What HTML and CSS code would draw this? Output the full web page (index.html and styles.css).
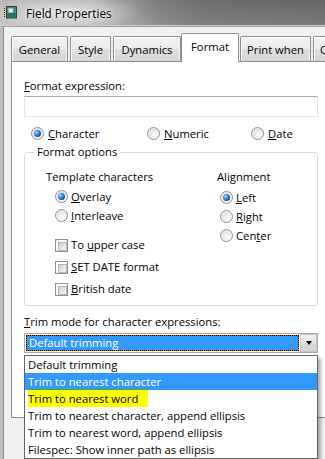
FILE: index.html
```html
<!DOCTYPE html>
<html>
<head>
<meta charset="utf-8">
<title>Field Properties</title>
<link rel="stylesheet" href="styles.css">
</head>
<body>
<div class="window">
  <div class="titlebar">
    <svg class="appicon" width="13" height="13" viewBox="0 0 13 13" aria-hidden="true">
      <line x1="0.5" y1="2" x2="0.5" y2="12" stroke="#e6cf1a" stroke-width="1"/>
      <line x1="0.5" y1="2" x2="0.5" y2="12" stroke="#222" stroke-width="1" stroke-dasharray="1 1"/>
      <rect x="2.5" y="0.5" width="10" height="11.5" fill="#3f8c86" stroke="#3a3a3a"/>
      <rect x="3.5" y="7" width="8" height="4.5" fill="#2f6f6a"/>
      <rect x="4.5" y="2.5" width="4.5" height="4" fill="#d9f0ee" stroke="#8fc1bd" stroke-width="0.6"/>
    </svg>
    <span class="title">Field Properties</span>
  </div>
  <div class="frame">
    <div class="client">
      <div class="tabstrip">
        <div class="tab t-general">General</div>
        <div class="tab t-style">Style</div>
        <div class="tab t-dynamics">Dynamics</div>
        <div class="tab active t-format">Format</div>
        <div class="tab t-print">Print when</div>
        <div class="tab t-more">C</div>
      </div>
      <div class="panel">
        <div class="content">
          <div class="field-label"><u>F</u>ormat expression:</div>
          <div class="textbox"></div>
          <div class="typerow">
            <div class="opt opt-char"><span class="radio on"></span><span><u>C</u>haracter</span></div>
            <div class="opt opt-num"><span class="radio"></span><span><u>N</u>umeric</span></div>
            <div class="opt"><span class="radio"></span><span><u>D</u>ate</span></div>
          </div>
          <fieldset class="group">
            <legend>Format options</legend>
            <div class="cols">
              <div class="col-left">
                <div class="heading">Template characters</div>
                <div class="rlist">
                  <div class="rrow"><span class="radio on"></span><span><u>O</u>verlay</span></div>
                  <div class="rrow"><span class="radio"></span><span><u>I</u>nterleave</span></div>
                </div>
                <div class="checks">
                  <div class="crow"><span class="check"></span><span>To <u>u</u>pper case</span></div>
                  <div class="crow"><span class="check"></span><span><u>S</u>ET DATE format</span></div>
                  <div class="crow"><span class="check"></span><span><u>B</u>ritish date</span></div>
                </div>
              </div>
              <div class="col-right">
                <div class="heading">Alignment</div>
                <div class="rlist">
                  <div class="rrow"><span class="radio on"></span><span><u>L</u>eft</span></div>
                  <div class="rrow"><span class="radio"></span><span><u>R</u>ight</span></div>
                  <div class="rrow"><span class="radio"></span><span>Cen<u>t</u>er</span></div>
                </div>
              </div>
            </div>
          </fieldset>
          <div class="field-label trim-label"><u>T</u>rim mode for character expressions:</div>
          <div class="combo-wrap">
            <div class="combo">
              <div class="combo-value">Default trimming</div>
              <div class="combo-btn"><span class="arrow"></span></div>
            </div>
            <ul class="droplist">
              <li>Default trimming</li>
              <li class="sel">Trim to nearest character</li>
              <li><span class="marker">Trim to nearest word</span></li>
              <li>Trim to nearest character, append ellipsis</li>
              <li>Trim to nearest word, append ellipsis</li>
              <li>Filespec: Show inner path as ellipsis</li>
            </ul>
          </div>
        </div>
      </div>
    </div>
  </div>
</div>
</body>
</html>
```

FILE: styles.css
```css
* { box-sizing: border-box; }

html, body {
  margin: 0;
  padding: 0;
}

body {
  width: 325px;
  height: 459px;
  overflow: hidden;
  font-family: "Open Sans", "Noto Sans", sans-serif;
  font-size: 11.25px;
  color: #000;
  background: #f0f0f0;
}

.window {
  display: flex;
  flex-direction: column;
  height: 459px;
}

/* ---------- title bar ---------- */
.titlebar {
  display: flex;
  align-items: center;
  gap: 9px;
  height: 26px;
  padding-left: 4px;
  border-bottom: 1px solid #cdcdcd;
  background:
    radial-gradient(ellipse 75px 17px at 66px 12px, rgba(255,255,255,0.55), rgba(255,255,255,0) 100%),
    linear-gradient(180deg, rgba(0,0,0,0.06), rgba(255,255,255,0.08)),
    linear-gradient(90deg, #c3c3c3 0%, #bdbdbd 28%, #a4a4a4 38%, #858585 48%, #747474 62%, #6d6d6d 100%);
}

.appicon {
  flex: none;
  display: block;
}

.title {
  font-size: 11.75px;
  color: #000;
  text-shadow: 0 0 6px rgba(255,255,255,0.9), 0 0 3px rgba(255,255,255,0.8);
}

/* ---------- frame / client ---------- */
.frame {
  flex: 1;
  padding-left: 3px;
  background: #bdbdbd;
}

.client {
  height: 100%;
  background: #f0f0f0;
  border-left: 1px solid #8a8a8a;
  border-top: 1px solid #9d9d9d;
}

/* ---------- tabs ---------- */
.tabstrip {
  display: flex;
  align-items: flex-end;
  height: 28px;
  margin-top: 6px;
  margin-left: 7px;
}

.tab {
  flex: none;
  height: 25px;
  padding-top: 5px;
  line-height: 16px;
  text-align: center;
  white-space: nowrap;
  overflow: hidden;
  border: 1px solid #898c95;
  border-bottom: none;
  border-radius: 2px 2px 0 0;
  background: linear-gradient(180deg, #f3f3f3 0%, #ececec 48%, #dedede 52%, #d6d6d6 100%);
  box-shadow: inset 1px 1px 0 #fcfcfc, inset -1px 0 0 #f4f4f4;
}

.tab.active {
  position: relative;
  z-index: 1;
  height: 29px;
  margin-bottom: -1px;
  padding-top: 5px;
  background: #fff;
  box-shadow: none;
}

.t-general  { width: 57px; }
.t-style    { width: 41px; margin-left: 2px; }
.t-dynamics { width: 68px; margin-left: 2px; }
.t-format   { width: 58px; }
.t-print    { width: 71px; margin-left: 1px; }
.t-more     { width: 60px; margin-left: 2px; text-align: left; padding-left: 6px; }

/* ---------- panel ---------- */
.panel {
  width: 340px;
  height: 357px;
  margin-left: 7px;
  border: 1px solid #898c95;
  background: #fff;
  padding: 16px 0 0 12px;
}

.content {
  width: 294px;
}

.field-label {
  line-height: 16px;
  white-space: nowrap;
}

.textbox {
  height: 21px;
  margin-top: 2px;
  background: #fff;
  border: 1px solid;
  border-color: #abadb3 #dbdfe6 #e3e9ef #e2e3ea;
}

.typerow {
  display: flex;
  height: 17px;
  line-height: 17px;
  margin-top: 8px;
  padding-left: 7px;
}

.opt {
  display: flex;
  align-items: center;
  gap: 4px;
}

.opt-char { width: 116px; }
.opt-num  { width: 104px; }

/* radio button */
.radio {
  flex: none;
  display: inline-flex;
  align-items: center;
  justify-content: center;
  width: 13px;
  height: 13px;
  border-radius: 50%;
  border: 1px solid #8d8f91;
  background: radial-gradient(circle at 60% 65%, #fbfbfb 0, #eeeeee 35%, #c9cacc 100%);
  box-shadow: inset 0 0 0 1px rgba(255,255,255,0.6);
}

.radio.on::after {
  content: "";
  width: 7px;
  height: 7px;
  border-radius: 50%;
  background: radial-gradient(circle at 35% 35%, #a7dcff 0, #3b8fdc 35%, #164f92 70%, #0d3668 100%);
}

/* checkbox */
.check {
  flex: none;
  display: inline-block;
  width: 13px;
  height: 13px;
  border: 1px solid #8e8f8f;
  background: #fff;
  padding: 2px;
}

.check::after {
  content: "";
  display: block;
  width: 100%;
  height: 100%;
  border: 1px solid #b3b6ba;
  background: linear-gradient(135deg, #cdd0d4 0%, #e4e6e8 55%, #f4f5f6 100%);
}

/* ---------- group box ---------- */
.group {
  margin: 2px 0 0;
  padding: 9px 0 5px 0;
  min-width: 0;
  border: 1px solid #d5dfe5;
  border-radius: 3px;
}

.group legend {
  margin-left: 9px;
  padding: 0 3px;
  line-height: 16px;
}

.cols {
  display: flex;
  padding-left: 21px;
}

.col-left { width: 171px; }

.heading {
  line-height: 16px;
  white-space: nowrap;
}

.rlist {
  margin-top: 2px;
  padding-left: 9px;
}

.col-right .rlist {
  margin-top: 3px;
  padding-left: 3px;
}

.rrow {
  display: flex;
  align-items: center;
  gap: 3px;
  height: 19px;
  line-height: 19px;
  white-space: nowrap;
}

.checks {
  margin-top: 9px;
  padding-left: 9px;
}

.crow {
  display: flex;
  align-items: center;
  gap: 3px;
  height: 22px;
  line-height: 22px;
  white-space: nowrap;
}

/* ---------- combo box ---------- */
.trim-label {
  margin-top: 8px;
}

.combo-wrap {
  position: relative;
  margin-top: 3px;
}

.combo {
  display: flex;
  height: 20px;
  border: 1px solid #a9abaf;
  background: #fff;
}

.combo-value {
  flex: 1;
  margin: 1px 1px 1px 1px;
  padding-left: 2px;
  line-height: 14px;
  color: #fff;
  border: 1px dotted #000;
  background: linear-gradient(#3399ff, #3399ff) padding-box, #c86400 border-box;
  white-space: nowrap;
}

.combo-btn {
  flex: none;
  width: 17px;
  display: flex;
  align-items: center;
  justify-content: center;
  border: 1px solid #c4c4c4;
  background: linear-gradient(180deg, #f1f1f1 0%, #e5e5e5 50%, #d9d9d9 51%, #d3d3d3 100%);
}

.arrow {
  width: 0;
  height: 0;
  border-left: 3.5px solid transparent;
  border-right: 3.5px solid transparent;
  border-top: 4px solid #000;
}

/* ---------- drop-down list ---------- */
.droplist {
  position: absolute;
  z-index: 2;
  top: calc(100% + 2px);
  left: 0;
  width: 294px;
  margin: 0;
  padding: 0;
  list-style: none;
  background: #fff;
  border: 1px solid #646464;
  box-shadow: 3px 3px 3px rgba(0,0,0,0.3);
}

.droplist li {
  height: 17px;
  line-height: 17px;
  padding-left: 3px;
  white-space: nowrap;
}

.droplist li.sel {
  background: #3399ff;
  color: #fff;
}

.marker {
  display: inline-block;
  padding-right: 10px;
  background: #ffff00;
  box-shadow: 0 -1px 0 #4aa82a;
}
```
